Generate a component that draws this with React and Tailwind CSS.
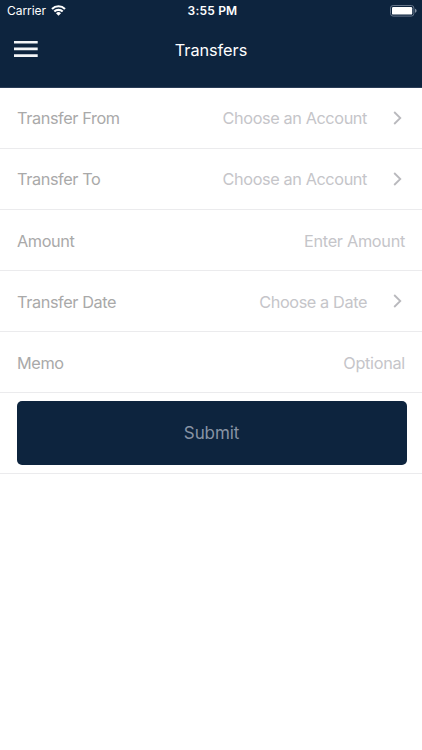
import React from "react";

const fields = [
  { label: "Transfer From", value: "Choose an Account", picker: true },
  { label: "Transfer To", value: "Choose an Account", picker: true },
  { label: "Amount", value: "Enter Amount", picker: false },
  { label: "Transfer Date", value: "Choose a Date", picker: true },
  { label: "Memo", value: "Optional", picker: false },
];

const MenuIcon = () => (
  <svg className="w-6 h-[18px]" viewBox="0 0 24 18" stroke="#f3f5f7" strokeWidth="2.6">
    <path d="M0 2.300h23.700M0 8.900h23.700M0 15.600h23.700" />
  </svg>
);

const WifiIcon = () => (
  <svg className="w-[15px] h-[11px] -mt-px" viewBox="0 0 15 11" fill="none" stroke="#fff" strokeWidth="2.1">
    <path d="M1 4a9.200 9.200 0 0 1 13 0" />
    <path d="M3.300 6.600a6 6 0 0 1 8.400 0" />
    <path d="M7.500 10.700 5 8.200a3.600 3.600 0 0 1 5 0z" fill="#fff" stroke="none" />
  </svg>
);

const BatteryIcon = () => (
  <svg className="w-[27px] h-[12px]" viewBox="0 0 27 12" fill="none">
    <rect x="0.5" y="0.5" width="23.4" height="10.6" rx="2.6" stroke="#65758a" />
    <rect x="2" y="2" width="20.2" height="7.6" rx="1.2" fill="#fff" />
    <path d="M25 3.800v4c.9-.3 1.600-1.100 1.600-2s-.7-1.700-1.600-2z" fill="#8290a1" />
  </svg>
);

const StatusBar = () => (
  <div className="grid grid-cols-3 items-center h-[22px] pl-[7px] pr-[5px]">
    <div className="flex items-center gap-[5px]">
      <span className="text-[12px] leading-[22px] -tracking-[0.05px]">Carrier</span>
      <WifiIcon />
    </div>
    <span className="pl-px text-center text-[12px] leading-[22px] font-semibold tracking-[0.2px]">3:55 PM</span>
    <div className="flex justify-end">
      <BatteryIcon />
    </div>
  </div>
);

const FieldRow = ({ label, value, picker }) => (
  <div className="flex items-center justify-between h-[61.1px] pt-px pl-[17px] pr-4 border-b border-[#ebebed] text-[16.3px] -tracking-[0.4px]">
    <span className="text-[#a9a9a9]">{label}</span>
    {picker ? (
      <div className="flex items-center">
        <span className="text-[#c5c5c9]">{value}</span>
        <svg className="w-[9px] h-[14px] ml-[26px] mr-1 -mt-px" viewBox="0 0 9 14" fill="none" stroke="#b9b9bd" strokeWidth="1.8">
          <path d="M1.200 1 7.300 7 1.200 13" />
        </svg>
      </div>
    ) : (
      <span className="pr-px -tracking-[0.3px] text-[#c5c5c9]">{value}</span>
    )}
  </div>
);

const App = () => {
  return (
    <div className="w-full h-[750px] overflow-hidden bg-white font-['Inter',sans-serif]">
      <header className="h-[88px] bg-[#0d243e] text-white border-b border-[#2a3d57]">
        <StatusBar />
        <div className="grid grid-cols-3 items-center h-[55px] px-[14px]">
          <button className="w-6 pb-[2px]" aria-label="Menu">
            <MenuIcon />
          </button>
          <h1 className="pt-px text-center text-[16.3px] -tracking-[0.05px]">Transfers</h1>
        </div>
      </header>

      <main>
        {fields.map((field) => (
          <FieldRow key={field.label} {...field} />
        ))}
        <div className="h-[81px] pl-[16.5px] pr-[15.5px] pt-2 border-b border-[#ebebed]">
          <button className="w-full h-[63.5px] pt-[2px] rounded-[5px] bg-[#0d243e] text-[17px] -tracking-[0.1px] text-[#8793a4]">
            Submit
          </button>
        </div>
      </main>
    </div>
  );
};

export default App;
